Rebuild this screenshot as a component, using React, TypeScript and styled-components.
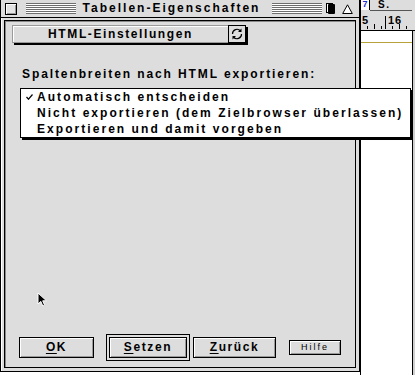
import styled, { createGlobalStyle } from 'styled-components';

const GlobalStyle = createGlobalStyle`
  html, body {
    margin: 0;
    padding: 0;
    background: #fff;
  }
  body {
    font-family: 'Liberation Sans', Arial, sans-serif;
  }
`;

const Screen = styled.div`
  position: relative;
  width: 415px;
  height: 375px;
  overflow: hidden;
  display: flex;
  background: #fff;
  font-family: 'Liberation Sans', Arial, sans-serif;
  font-weight: 700;
  font-size: 12px;
  letter-spacing: 1.6px;
  color: #000;
`;

const Window = styled.div`
  width: 360px;
  height: 372px;
  box-sizing: border-box;
  border: 1px solid #000;
  border-top: none;
  background: #dddddd;
  display: flex;
  flex-direction: column;
`;

const TitleBar = styled.div`
  height: 17px;
  border-bottom: 1px solid #000;
  display: flex;
  align-items: center;
  padding: 0 6px 0 4px;
`;

const CloseBox = styled.div`
  width: 12px;
  height: 12px;
  box-sizing: border-box;
  border: 1px solid #000;
  background: #e4e4e4;
  box-shadow: inset 1px 1px #fff, inset -1px -1px #999;
`;

const Stripes = styled.div<{ $ml: number }>`
  flex: 1;
  height: 11px;
  margin-left: ${(p) => p.$ml}px;
  background: repeating-linear-gradient(to bottom, #6e6e6e 0 1px, #fff 1px 2px);
`;

const Title = styled.div`
  margin: 0 12px 0 7px;
  line-height: 17px;
  letter-spacing: 2px;
  white-space: nowrap;
`;

const TitleIcon = styled.svg<{ $ml: number }>`
  display: block;
  margin-left: ${(p) => p.$ml}px;
`;

const Frame = styled.div`
  flex: 1;
  display: flex;
  padding: 2px 3px 3px 3px;
  box-shadow: inset 1px 0 #fff;
`;

const Content = styled.div`
  flex: 1;
  display: flex;
  flex-direction: column;
  border: 1px solid #000;
  box-shadow: inset 1px 1px #8a8a8a;
`;

const TabWrap = styled.div`
  display: flex;
  align-self: flex-start;
  margin: 4px 0 0 7px;
  box-shadow: 2px 2px 0 #000;
`;

const TabLabel = styled.div`
  width: 216px;
  height: 18px;
  box-sizing: border-box;
  border: 1px solid #9a9a9a;
  border-right: none;
  box-shadow: inset 1px 1px #fff;
  background: #dddddd;
  text-align: center;
  line-height: 17px;
`;

const TabIcon = styled.div`
  width: 18px;
  height: 18px;
  box-sizing: border-box;
  border: 1px solid #000;
  background: #dddddd;
  display: flex;
  align-items: center;
  justify-content: center;
`;

const Label = styled.div`
  margin: 23px 0 0 17px;
  line-height: 16px;
  letter-spacing: 1.9px;
  white-space: nowrap;
`;

const Spacer = styled.div`
  flex: 1;
`;

const ButtonRow = styled.div`
  display: flex;
  align-items: center;
  height: 28px;
  margin: 0 0 6px 14px;
`;

const Button = styled.div<{ $w: number; $ml?: number }>`
  width: ${(p) => p.$w}px;
  height: 21px;
  box-sizing: border-box;
  margin-left: ${(p) => p.$ml ?? 0}px;
  border: 1px solid #000;
  background: #dddddd;
  box-shadow: inset 1px 1px #fff, inset -1px -1px #999;
  text-align: center;
  line-height: 19px;
  white-space: nowrap;
`;

const DefaultRing = styled.div<{ $ml: number }>`
  margin-left: ${(p) => p.$ml}px;
  padding: 2px;
  border: 1px solid #000;
  display: flex;
`;

const SmallButton = styled(Button)`
  height: 15px;
  font-size: 9px;
  font-weight: 400;
  letter-spacing: 2px;
  line-height: 13px;
`;

const Key = styled.span`
  text-decoration: underline;
  text-decoration-thickness: 1px;
  text-underline-offset: 2px;
`;

const DocPane = styled.div`
  flex: 1;
  display: flex;
  flex-direction: column;
  border-left: 1px solid #000;
  background: #fff;
`;

const DocToolbar = styled.div`
  display: flex;
  height: 13px;
  background: #dddddd;
`;

const PageBox = styled.div`
  width: 8px;
  height: 10px;
  background: #fff;
  border-right: 1px solid #000;
  color: #1a2fd0;
  font-size: 9px;
  line-height: 9px;
  letter-spacing: 0;
  text-align: center;
`;

const SButton = styled.div`
  flex: 1;
  height: 10px;
  border-bottom: 1px solid #555;
  margin-right: 3px;
  padding-left: 8px;
  font-size: 10px;
  line-height: 9px;
`;

const Ruler = styled.svg`
  display: block;
  background: #dddddd;
  border-bottom: 1px solid #000;
`;

const DocBody = styled.div`
  flex: 1;
  display: flex;
`;

const Page = styled.div`
  flex: 1;
  border-right: 1px solid #000;
  background: #fff;
`;

const YellowRule = styled.div`
  height: 1px;
  margin-top: 11px;
  background: #b8a23a;
`;

const Strip = styled.div`
  width: 2px;
  background: #cfcfcf;
`;

const Menu = styled.div`
  position: absolute;
  left: 20px;
  top: 88px;
  width: 391px;
  box-sizing: border-box;
  border: 1px solid #000;
  background: #fff;
  box-shadow: 2px 2px 0 #000;
  letter-spacing: 2.05px;
`;

const MenuItem = styled.div`
  display: flex;
  align-items: center;
  height: 16px;
  white-space: nowrap;
`;

const CheckCell = styled.div`
  width: 16px;
  display: flex;
  justify-content: center;
`;

const Cursor = styled.svg`
  position: absolute;
  left: 37px;
  top: 292px;
`;

const items = [
  { label: 'Automatisch entscheiden', checked: true },
  { label: 'Nicht exportieren (dem Zielbrowser überlassen)', checked: false },
  { label: 'Exportieren und damit vorgeben', checked: false },
];

function SyncIcon() {
  return (
    <svg width="14" height="14" viewBox="0 0 14 14">
      <path d="M2.5 7 A4.5 4.5 0 0 1 10.5 4" fill="none" stroke="#000" strokeWidth="1.2" />
      <path d="M11.5 1.5 L11.5 5 L8 5 Z" fill="#000" />
      <path d="M11.5 7 A4.5 4.5 0 0 1 3.5 10" fill="none" stroke="#000" strokeWidth="1.2" />
      <path d="M2.5 12.5 L2.5 9 L6 9 Z" fill="#000" />
    </svg>
  );
}

export default function App() {
  return (
    <Screen>
      <GlobalStyle />
      <Window>
        <TitleBar>
          <CloseBox />
          <Stripes $ml={9} />
          <Title>Tabellen-Eigenschaften</Title>
          <Stripes $ml={0} />
          <TitleIcon $ml={4} width="9" height="11" viewBox="0 0 9 11">
            <rect x="0.5" y="0.5" width="6" height="9" fill="#fff" stroke="#000" />
            <rect x="2" y="1" width="7" height="10" rx="1" fill="#000" />
          </TitleIcon>
          <TitleIcon $ml={7} width="11" height="10" viewBox="0 0 11 10">
            <path d="M5.5 0.8 L10.3 9.5 L0.7 9.5 Z" fill="#fff" stroke="#000" />
          </TitleIcon>
        </TitleBar>
        <Frame>
          <Content>
            <TabWrap>
              <TabLabel>HTML-Einstellungen</TabLabel>
              <TabIcon>
                <SyncIcon />
              </TabIcon>
            </TabWrap>
            <Label>Spaltenbreiten nach HTML exportieren:</Label>
            <Spacer />
            <ButtonRow>
              <Button $w={75}>
                <Key>O</Key>K
              </Button>
              <DefaultRing $ml={12}>
                <Button $w={78}>
                  <Key>S</Key>etzen
                </Button>
              </DefaultRing>
              <Button $w={83} $ml={3}>
                <Key>Z</Key>urück
              </Button>
              <SmallButton $w={52} $ml={13}>
                Hilfe
              </SmallButton>
            </ButtonRow>
          </Content>
        </Frame>
      </Window>
      <DocPane>
        <DocToolbar>
          <PageBox>7</PageBox>
          <SButton>S.</SButton>
        </DocToolbar>
        <Ruler width="54" height="17" viewBox="0 0 54 17">
          <text x="1" y="11" fontFamily="Liberation Sans, Arial, sans-serif" fontWeight="700" fontSize="11" letterSpacing="1">5</text>
          <line x1="24.5" y1="3" x2="24.5" y2="16" stroke="#000" />
          <text x="27" y="11" fontFamily="Liberation Sans, Arial, sans-serif" fontWeight="700" fontSize="11" letterSpacing="1">16</text>
          {[6, 13, 20, 31, 38, 45].map((x) => (
            <line key={x} x1={x + 0.5} y1={x === 13 || x === 38 ? 11 : 13} x2={x + 0.5} y2="16" stroke="#000" />
          ))}
        </Ruler>
        <DocBody>
          <Page>
            <YellowRule />
          </Page>
          <Strip />
        </DocBody>
      </DocPane>
      <Menu>
        {items.map((it) => (
          <MenuItem key={it.label}>
            <CheckCell>
              {it.checked && (
                <svg width="7" height="6" viewBox="0 0 7 6">
                  <polyline points="0.5,3 2.5,5.2 6.5,0.5" fill="none" stroke="#000" strokeWidth="1.2" />
                </svg>
              )}
            </CheckCell>
            {it.label}
          </MenuItem>
        ))}
      </Menu>
      <Cursor width="11" height="16" viewBox="0 0 11 16">
        <path d="M1 1 L1 12 L3.8 9.4 L5.8 14 L7.6 13.2 L5.7 8.8 L9.5 8.8 Z" fill="#000" stroke="#fff" strokeWidth="1" />
      </Cursor>
    </Screen>
  );
}
